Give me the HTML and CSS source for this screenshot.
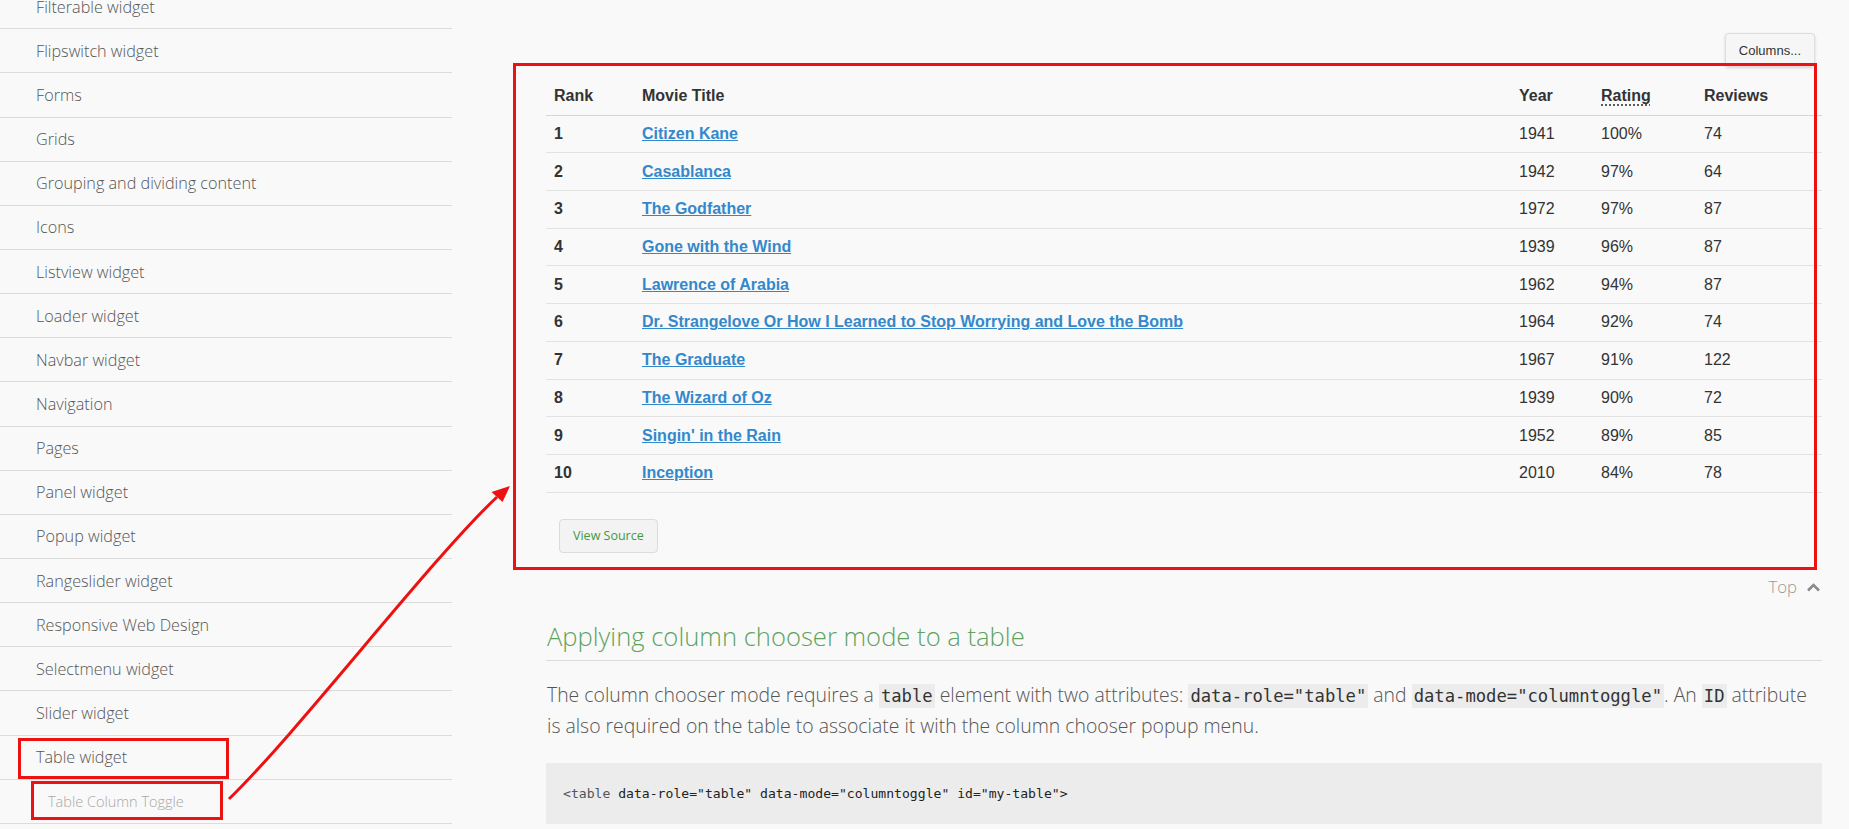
FILE: index.html
```html
<!DOCTYPE html>
<html lang="en">
<head>
<meta charset="utf-8">
<title>Table Column Toggle</title>
<link rel="stylesheet" href="styles.css">
</head>
<body>
<div class="page">
  <nav class="sidebar">
    <ul class="menu">
      <li>Filterable widget</li>
      <li>Flipswitch widget</li>
      <li>Forms</li>
      <li>Grids</li>
      <li>Grouping and dividing content</li>
      <li>Icons</li>
      <li>Listview widget</li>
      <li>Loader widget</li>
      <li>Navbar widget</li>
      <li>Navigation</li>
      <li>Pages</li>
      <li>Panel widget</li>
      <li>Popup widget</li>
      <li>Rangeslider widget</li>
      <li>Responsive Web Design</li>
      <li>Selectmenu widget</li>
      <li>Slider widget</li>
      <li>Table widget</li>
      <li class="sub">Table Column Toggle</li>
    </ul>
  </nav>

  <main class="content">
    <div class="toolbar">
      <button class="col-btn">Columns...</button>
    </div>

    <table class="movies">
      <colgroup>
        <col class="c-rank"><col class="c-title"><col class="c-year"><col class="c-rating"><col class="c-reviews">
      </colgroup>
      <thead>
        <tr><th>Rank</th><th>Movie Title</th><th>Year</th><th><abbr title="Rotten Tomato Rating">Rating</abbr></th><th>Reviews</th></tr>
      </thead>
      <tbody>
        <tr><th>1</th><td><a href="#">Citizen Kane</a></td><td>1941</td><td>100%</td><td>74</td></tr>
        <tr><th>2</th><td><a href="#">Casablanca</a></td><td>1942</td><td>97%</td><td>64</td></tr>
        <tr><th>3</th><td><a href="#">The Godfather</a></td><td>1972</td><td>97%</td><td>87</td></tr>
        <tr><th>4</th><td><a href="#">Gone with the Wind</a></td><td>1939</td><td>96%</td><td>87</td></tr>
        <tr><th>5</th><td><a href="#">Lawrence of Arabia</a></td><td>1962</td><td>94%</td><td>87</td></tr>
        <tr><th>6</th><td><a href="#">Dr. Strangelove Or How I Learned to Stop Worrying and Love the Bomb</a></td><td>1964</td><td>92%</td><td>74</td></tr>
        <tr><th>7</th><td><a href="#">The Graduate</a></td><td>1967</td><td>91%</td><td>122</td></tr>
        <tr><th>8</th><td><a href="#">The Wizard of Oz</a></td><td>1939</td><td>90%</td><td>72</td></tr>
        <tr><th>9</th><td><a href="#">Singin' in the Rain</a></td><td>1952</td><td>89%</td><td>85</td></tr>
        <tr><th>10</th><td><a href="#">Inception</a></td><td>2010</td><td>84%</td><td>78</td></tr>
      </tbody>
    </table>

    <a class="view-source" href="#">View Source</a>

    <div class="top-row">
      <span>Top</span>
      <svg class="caret" width="15" height="10" viewBox="0 0 15 10"><path d="M2 8.5 L7.5 3 L13 8.5" fill="none" stroke="#8a8a8a" stroke-width="2.6"/></svg>
    </div>

    <h2 class="section-title">Applying column chooser mode to a table</h2>
    <p class="intro">The column chooser mode requires a <code>table</code> element with two attributes: <code>data-role="table"</code> and <code>data-mode="columntoggle"</code>. An <code>ID</code> attribute is also required on the table to associate it with the column chooser popup menu.</p>
    <pre class="code"><span class="tag">&lt;table</span> data-role="table" data-mode="columntoggle" id="my-table"&gt;</pre>
  </main>

  <div class="mark mark-table"></div>
  <div class="mark mark-item"></div>
  <div class="mark mark-sub"></div>
  <svg class="arrow" width="1849" height="829" viewBox="0 0 1849 829">
    <path d="M229 799 C300 730 430 560 497 497" fill="none" stroke="#ee1111" stroke-width="3"/>
    <polygon points="510,486 491.5,492 502.5,502" fill="#ee1111"/>
  </svg>
</div>
</body>
</html>
```

FILE: styles.css
```css
* { box-sizing: border-box; }
html, body { margin: 0; padding: 0; }
body {
  background: #f9f9f9;
  width: 1849px;
  height: 829px;
  overflow: hidden;
  font-family: "Liberation Sans", Arial, sans-serif;
  color: #333;
}
.page {
  position: relative;
  display: flex;
  height: 829px;
}

/* Sidebar */
.sidebar { width: 452px; flex: none; }
.menu { list-style: none; margin: -14.85px 0 0; padding: 0; }
.menu li {
  height: 44.15px;
  border-bottom: 1px solid #dcdcdc;
  padding-left: 36px;
  display: flex;
  align-items: center;
  font-family: "Open Sans", sans-serif;
  font-weight: 300;
  font-size: 16.2px;
  color: #555;
}
.menu li.sub { padding-left: 48px; font-size: 14.5px; color: #a8a8a8; }

/* Content */
.content {
  margin-left: 94px;
  width: 1276px;
  flex: none;
  display: flex;
  flex-direction: column;
}
.toolbar {
  display: flex;
  justify-content: flex-end;
  padding-top: 33px;
  padding-right: 7px;
}
.col-btn {
  height: 34px;
  padding: 0 13px;
  font-family: "Liberation Sans", Arial, sans-serif;
  font-size: 13px;
  color: #333;
  background: #f6f6f6;
  border: 1px solid #dedede;
  border-radius: 4px;
  box-shadow: 0 1px 3px rgba(0,0,0,0.15);
}

.movies {
  margin-top: 11px;
  width: 1276px;
  table-layout: fixed;
  border-collapse: separate;
  border-spacing: 0;
  font-size: 16px;
}
.c-rank { width: 88px; }
.c-title { width: 877px; }
.c-year { width: 82px; }
.c-rating { width: 103px; }
.c-reviews { width: 126px; }
.movies th, .movies td {
  padding: 8.35px 8px;
  line-height: 20px;
  border-bottom: 1px solid #e2e2e2;
  text-align: left;
  color: #333;
  white-space: nowrap;
}
.movies thead th { border-bottom-color: #d6d6d6; }
.movies th { font-weight: bold; }
.movies td { font-weight: normal; }
.movies a { color: #3388cc; font-weight: bold; text-decoration: underline; }
.movies abbr { text-decoration: underline dotted; text-underline-offset: 3px; }

.view-source {
  align-self: flex-start;
  margin: 26.3px 0 0 13px;
  height: 34px;
  padding: 0 13px;
  display: flex;
  align-items: center;
  background: #f3f3f3;
  border: 1px solid #dcdcdc;
  border-radius: 4px;
  font-family: "Open Sans", sans-serif;
  font-size: 12.5px;
  color: #3f9a3f;
  text-decoration: none;
}

.top-row {
  margin-top: 24px;
  height: 20px;
  display: flex;
  justify-content: flex-end;
  align-items: center;
  gap: 9px;
  padding-right: 1px;
  font-family: "Open Sans", sans-serif;
  font-weight: 300;
  font-size: 16.7px;
  color: #9a9a9a;
}
.caret { display: block; }

.section-title {
  margin: 22.7px 0 0;
  padding: 0 0 6.3px 1px;
  border-bottom: 1px solid #dcdcdc;
  font-family: "Open Sans", sans-serif;
  font-weight: 300;
  font-size: 25.6px;
  line-height: 34px;
  color: #5ea35e;
}

.intro {
  margin: 19px 0 0;
  padding-left: 1px;
  font-family: "Open Sans", sans-serif;
  font-weight: 300;
  font-size: 19.4px;
  line-height: 30px;
  color: #555;
}
.intro code {
  font-family: "DejaVu Sans Mono", "Liberation Mono", monospace;
  font-size: 17.2px;
  background: #ececec;
  padding: 2px 2px;
  color: #333;
}

.code {
  margin: 22.3px 0 0;
  height: 61px;
  padding: 20px 17px;
  background: #ececec;
  font-family: "DejaVu Sans Mono", "Liberation Mono", monospace;
  font-size: 13.1px;
  line-height: 21px;
  color: #222;
}
.code .tag { color: #555; }

/* Annotation overlays */
.mark {
  position: absolute;
  border: 3px solid #ee1111;
  pointer-events: none;
}
.mark-table { left: 513px; top: 63px; width: 1304px; height: 507px; }
.mark-item { left: 18px; top: 738px; width: 211px; height: 41px; }
.mark-sub { left: 31px; top: 781px; width: 192px; height: 39px; }
.arrow { position: absolute; left: 0; top: 0; pointer-events: none; }
```
